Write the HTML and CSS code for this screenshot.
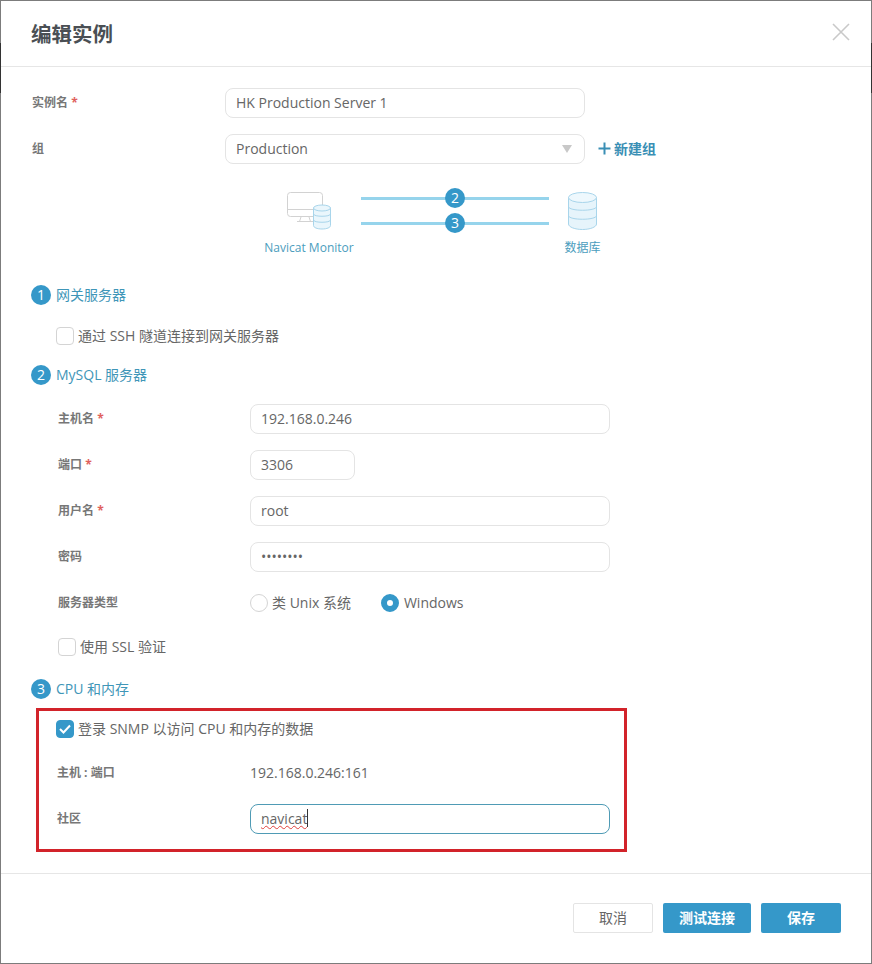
FILE: index.html
```html
<!DOCTYPE html>
<html lang="zh">
<head>
<meta charset="utf-8">
<title>编辑实例</title>
<link rel="stylesheet" href="styles.css">
</head>
<body>
<div class="dialog">
  <header class="head">
    <h1 class="title">编辑实例</h1>
    <svg class="close" width="18" height="18" viewBox="0 0 18 18"><path d="M1 1L17 17M17 1L1 17" fill="none" stroke="#c9c9c9" stroke-width="1.6"/></svg>
  </header>
  <main class="body">
    <div class="row">
      <label class="lab">实例名 <span class="req">*</span></label>
      <input class="field w360" value="HK Production Server 1">
    </div>
    <div class="row gap16">
      <label class="lab">组</label>
      <div class="field w360 select">Production<span class="arrow"></span></div>
      <span class="newgroup"><svg width="13" height="13" viewBox="0 0 13 13"><path d="M6.5 0.5V12.5M0.5 6.5H12.5" fill="none" stroke="#3a8fb5" stroke-width="2"/></svg>新建组</span>
    </div>
    <div class="diagram">
      <div class="node left">
        <svg width="44" height="38" viewBox="0 0 44 38">
          <rect x="0.5" y="0.5" width="35" height="24" rx="3" fill="#fff" stroke="#d2d2d2"/>
          <path d="M0.500 17.500H35.500M14 25L12.500 29.500M22 25L23.500 29.500M10 29.500H26" fill="none" stroke="#d2d2d2"/>
          <path d="M26.500 16V33.500C26.500 35.500 30 37 35 37S43.500 35.500 43.500 33.500V16Z" fill="#eaf6fc" stroke="#a8d5eb"/>
          <ellipse cx="35" cy="16" rx="8.500" ry="3" fill="#eaf6fc" stroke="#a8d5eb"/>
          <path d="M26.500 22C26.500 25 43.500 25 43.500 22M26.500 28C26.500 31 43.500 31 43.500 28" fill="none" stroke="#a8d5eb"/>
        </svg>
        <span class="cap">Navicat Monitor</span>
      </div>
      <div class="links">
        <div class="link"><span class="badge">2</span></div>
        <div class="link"><span class="badge">3</span></div>
      </div>
      <div class="node right">
        <svg width="29" height="38" viewBox="0 0 29 38">
          <path d="M0.500 5.500V32C0.500 35 7 37.500 14.500 37.500S28.500 35 28.500 32V5.500Z" fill="#e6f4fb" stroke="#a8d5eb"/>
          <ellipse cx="14.500" cy="5.500" rx="14" ry="5" fill="#eef8fd" stroke="#a8d5eb"/>
          <path d="M0.500 14.500C0.500 19.500 28.500 19.500 28.500 14.500M0.500 23.500C0.500 28.500 28.500 28.500 28.500 23.500" fill="none" stroke="#a8d5eb"/>
        </svg>
        <span class="cap">数据库</span>
      </div>
    </div>

    <h2 class="sec s1"><span class="badge">1</span><span class="sectext">网关服务器</span></h2>
    <div class="check c1"><span class="box"></span><span class="ctext">通过 SSH 隧道连接到网关服务器</span></div>

    <h2 class="sec s2"><span class="badge">2</span><span class="sectext">MySQL 服务器</span></h2>
    <div class="nest">
      <div class="row"><label class="lab">主机名 <span class="req">*</span></label><input class="field w360" value="192.168.0.246"></div>
      <div class="row gap16"><label class="lab">端口 <span class="req">*</span></label><input class="field w105" value="3306"></div>
      <div class="row gap16"><label class="lab">用户名 <span class="req">*</span></label><input class="field w360" value="root"></div>
      <div class="row gap16"><label class="lab">密码</label><input class="field w360" type="password" value="12345678"></div>
      <div class="row gap16">
        <label class="lab">服务器类型</label>
        <span class="radio"><span class="dot"></span><span class="ctext">类 Unix 系统</span></span>
        <span class="radio on"><span class="dot"></span><span class="ctext">Windows</span></span>
      </div>
      <div class="check c2"><span class="box"></span><span class="ctext">使用 SSL 验证</span></div>
    </div>

    <h2 class="sec s3"><span class="badge">3</span><span class="sectext">CPU 和内存</span></h2>
    <section class="mark">
      <div class="check c3"><span class="box on"><svg width="12" height="10" viewBox="0 0 12 10"><path d="M1 5L4.500 8.500L11 1.500" fill="none" stroke="#fff" stroke-width="2"/></svg></span><span class="ctext">登录 SNMP 以访问 CPU 和内存的数据</span></div>
      <div class="row gap20"><label class="lab">主机 : 端口</label><span class="val">192.168.0.246:161</span></div>
      <div class="row gap16"><label class="lab">社区</label><div class="field w360 focus"><span class="spell">navicat</span><span class="caret"></span></div></div>
    </section>
  </main>
  <footer class="foot">
    <button class="btn plain">取消</button>
    <button class="btn prim w88">测试连接</button>
    <button class="btn prim w80">保存</button>
  </footer>
</div>
</body>
</html>
```
FILE: styles.css
```css
* { box-sizing: border-box; }
html, body { margin: 0; padding: 0; background: #fff; overflow: hidden; }
body { font-family: "Open Sans", "Noto Sans CJK SC", sans-serif; font-size: 14px; color: #666; }
.dialog { width: 872px; height: 964px; border: 1px solid #7c7c7c; display: flex; flex-direction: column; background: #fff; position: relative; }
.dialog::before, .dialog::after { content: ""; position: absolute; top: 42px; width: 1px; height: 50px; background: #333; }
.dialog::before { left: -1px; }
.dialog::after { right: -1px; }
.head { height: 66px; flex: none; border-bottom: 1px solid #e6e6e6; display: flex; align-items: center; justify-content: space-between; padding: 0 21px 0 30px; }
.title { margin: 0; font-size: 20.5px; line-height: 28px; font-weight: 700; color: #4a4f54; }
.close { margin-top: -4px; }
.body { flex: 1; padding: 21px 0 0 30px; }
.row { display: flex; align-items: center; height: 30px; }
.gap16 { margin-top: 16px; }
.gap20 { margin-top: 20px; }
.lab { width: 194px; flex: none; padding: 0 0 2px 1px; font-size: 12px; font-weight: 700; color: #777; }
.nest .lab { width: 193px; }
.mark .lab { width: 194px; padding-left: 1px; }
.req { color: #e0605c; }
.field { height: 30px; border: 1px solid #e4e4e4; border-radius: 8px; padding: 0 10px 2px; font: inherit; color: #666; background: #fff; outline: none; display: flex; align-items: center; position: relative; }
.w360 { width: 360px; flex: none; }
.w105 { width: 105px; flex: none; }
.arrow { position: absolute; right: 12px; top: 10px; border: 5.5px solid transparent; border-top: 8px solid #c8c8c8; border-bottom: 0; }
.newgroup { margin-left: 13px; padding-bottom: 2px; display: flex; align-items: center; gap: 3px; font-size: 14px; font-weight: 700; color: #3a8fb5; }
.diagram { margin-top: 16px; height: 80px; display: flex; padding-left: 233px; }
.node { display: flex; flex-direction: column; align-items: center; padding-top: 12px; }
.node.left { width: 90px; }
.node.right { width: 37px; margin-left: 15px; }
.cap { margin-top: 10px; font-size: 12px; line-height: 16px; color: #4b9dbd; white-space: nowrap; }
.links { width: 188px; margin-left: 7px; padding-top: 8px; display: flex; flex-direction: column; gap: 5px; }
.link { height: 20px; display: flex; align-items: center; justify-content: center; background: linear-gradient(#96d4ec, #96d4ec) center / 100% 3px no-repeat; }
.badge { width: 20px; height: 20px; flex: none; border-radius: 50%; background: #3598c9; color: #fff; font-size: 14px; font-weight: 400; padding-bottom: 1px; display: flex; align-items: center; justify-content: center; }
.sec { margin: 0; height: 20px; display: flex; align-items: center; gap: 5px; font-size: 14px; font-weight: 400; color: #3f96b8; }
.sectext { padding-bottom: 2px; }
.ctext { padding-bottom: 2px; }
.s1 { margin-top: 25px; }
.s2 { margin-top: 20px; }
.s3 { margin-top: 23px; }
.check { display: flex; align-items: center; height: 18px; font-size: 14px; color: #666; white-space: nowrap; }
.box { width: 18px; height: 18px; flex: none; border: 1px solid #d4d4d4; border-radius: 4px; margin-right: 4px; background: #fff; display: flex; align-items: center; justify-content: center; }
.box.on { background: #3598c9; border-color: #3598c9; }
.c1 { margin: 22px 0 0 25px; }
.nest { margin: 19px 0 0 26px; }
.c2 { margin: 20px 0 0 1px; }
.radio { display: flex; align-items: center; font-size: 14px; gap: 4px; color: #666; margin-right: 29px; }
.radio.on { gap: 5px; margin-left: 1px; }
.dot { width: 18px; height: 18px; border: 1px solid #d4d4d4; border-radius: 50%; background: #fff; }
.radio.on .dot { border: 6px solid #3598c9; }
.mark { margin: 9px 0 0 5px; width: 591px; height: 144px; border: 3px solid #d2232a; padding: 9px 0 0 17px; }
.val { font-size: 14px; color: #666; padding-bottom: 2px; }
.focus { border-color: #4f9bb5; }
.spell { text-decoration: underline wavy #e0403c 1px; text-underline-offset: 1px; }
.caret { width: 1px; height: 18px; background: #333; }
.foot { height: 90px; flex: none; border-top: 1px solid #e6e6e6; display: flex; justify-content: flex-end; align-items: flex-start; gap: 10px; padding: 29px 30px 0 0; }
.btn { height: 30px; border-radius: 2px; font: inherit; font-size: 14px; padding: 0 0 2px; }
.plain { width: 80px; background: #fff; border: 1px solid #e4e4e4; color: #666; }
.prim { background: #3598c9; border: 0; color: #fff; font-weight: 700; }
.w88 { width: 88px; }
.w80 { width: 80px; }
```
